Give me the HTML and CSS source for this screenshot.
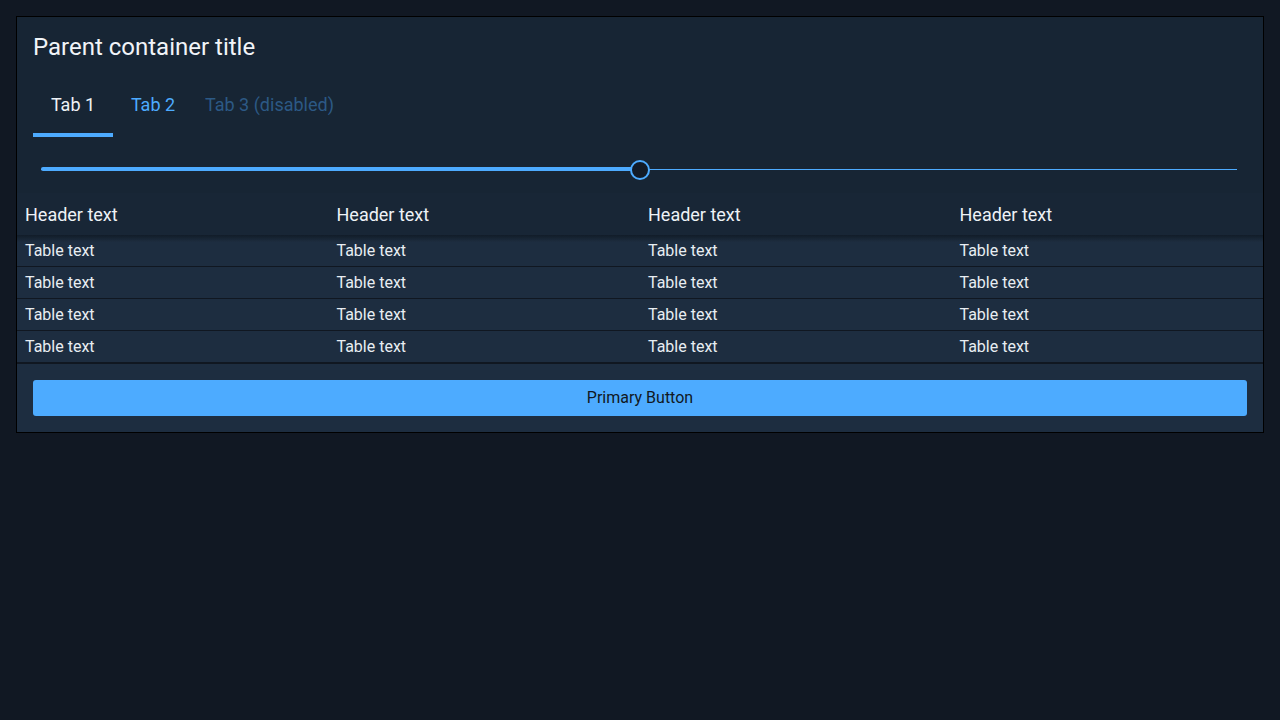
FILE: index.html
```html
<!DOCTYPE html>
<html>
<head>
<meta charset="utf-8">
<link rel="stylesheet" href="styles.css">
</head>
<body>
<div class="panel">
  <div class="panel-head">
    <h1 class="title">Parent container title</h1>
    <div class="tabs">
      <div class="tab active">Tab 1</div>
      <div class="tab link">Tab 2</div>
      <div class="tab disabled">Tab 3 (disabled)</div>
    </div>
    <div class="slider">
      <div class="track">
        <div class="fill"></div>
        <div class="thumb"></div>
      </div>
    </div>
  </div>
  <table class="grid">
    <thead>
      <tr><th>Header text</th><th>Header text</th><th>Header text</th><th>Header text</th></tr>
    </thead>
    <tbody>
      <tr><td>Table text</td><td>Table text</td><td>Table text</td><td>Table text</td></tr>
      <tr><td>Table text</td><td>Table text</td><td>Table text</td><td>Table text</td></tr>
      <tr><td>Table text</td><td>Table text</td><td>Table text</td><td>Table text</td></tr>
      <tr><td>Table text</td><td>Table text</td><td>Table text</td><td>Table text</td></tr>
    </tbody>
  </table>
  <div class="footer">
    <button class="primary">Primary Button</button>
  </div>
</div>
</body>
</html>
```
FILE: styles.css
```css
html, body {
  margin: 0;
  padding: 0;
  background: #111823;
  font-family: Roboto, "Liberation Sans", sans-serif;
  color: #e8edf2;
}
body {
  padding: 16px;
}
.panel {
  border: 1px solid #000;
  background: #172534;
}
.panel-head {
  padding: 16px 16px 8px;
}
.title {
  margin: 0 0 12px;
  font-size: 24px;
  line-height: 28px;
  font-weight: 400;
  color: #f1f4f8;
}
.tabs {
  display: flex;
}
.tab {
  min-width: 80px;
  box-sizing: border-box;
  height: 64px;
  padding: 2px 12px 0;
  display: flex;
  align-items: center;
  justify-content: center;
  font-size: 18px;
  border-bottom: 4px solid transparent;
}
.tab.active {
  color: #eef2f6;
  border-bottom-color: #4dabff;
}
.tab.link {
  color: #4dabff;
}
.tab.disabled {
  color: #2c5985;
}
.slider {
  padding: 16px 8px 0;
  height: 32px;
  display: flex;
  align-items: center;
}
.track {
  position: relative;
  flex: 1;
  height: 1px;
  background: #4dabff;
  margin-right: 2px;
}
.fill {
  position: absolute;
  left: 0;
  top: -1.5px;
  width: 50%;
  height: 4px;
  border-radius: 2px;
  background: #4dabff;
}
.thumb {
  position: absolute;
  left: 50%;
  top: 0;
  width: 16px;
  height: 16px;
  margin: -9px 0 0 -9px;
  border: 2px solid #4dabff;
  border-radius: 50%;
  background: #131b27;
}
.grid {
  width: 100%;
  border-collapse: collapse;
  table-layout: fixed;
}
.grid th {
  text-align: left;
  font-weight: 400;
  font-size: 18px;
  height: 42px;
  padding: 0 8px;
  background: #182636;
  color: #eef2f6;
}
.grid td {
  font-size: 16px;
  height: 31px;
  padding: 0 8px;
  background: #1d2d40;
  border-bottom: 1px solid #101721;
}
.grid tbody tr:first-child td {
  background: linear-gradient(rgba(8, 14, 22, 0.55), rgba(8, 14, 22, 0) 7px), #1d2d40;
}
.grid tbody tr:last-child td {
  border-bottom: 2px solid #101721;
}
.footer {
  padding: 16px;
  background: #1d2d40;
}
.primary {
  display: block;
  width: 100%;
  height: 36px;
  padding: 0 0 2px;
  border: none;
  border-radius: 3px;
  background: #4dabff;
  color: #111823;
  font-family: Roboto, "Liberation Sans", sans-serif;
  font-size: 16px;
}
```
